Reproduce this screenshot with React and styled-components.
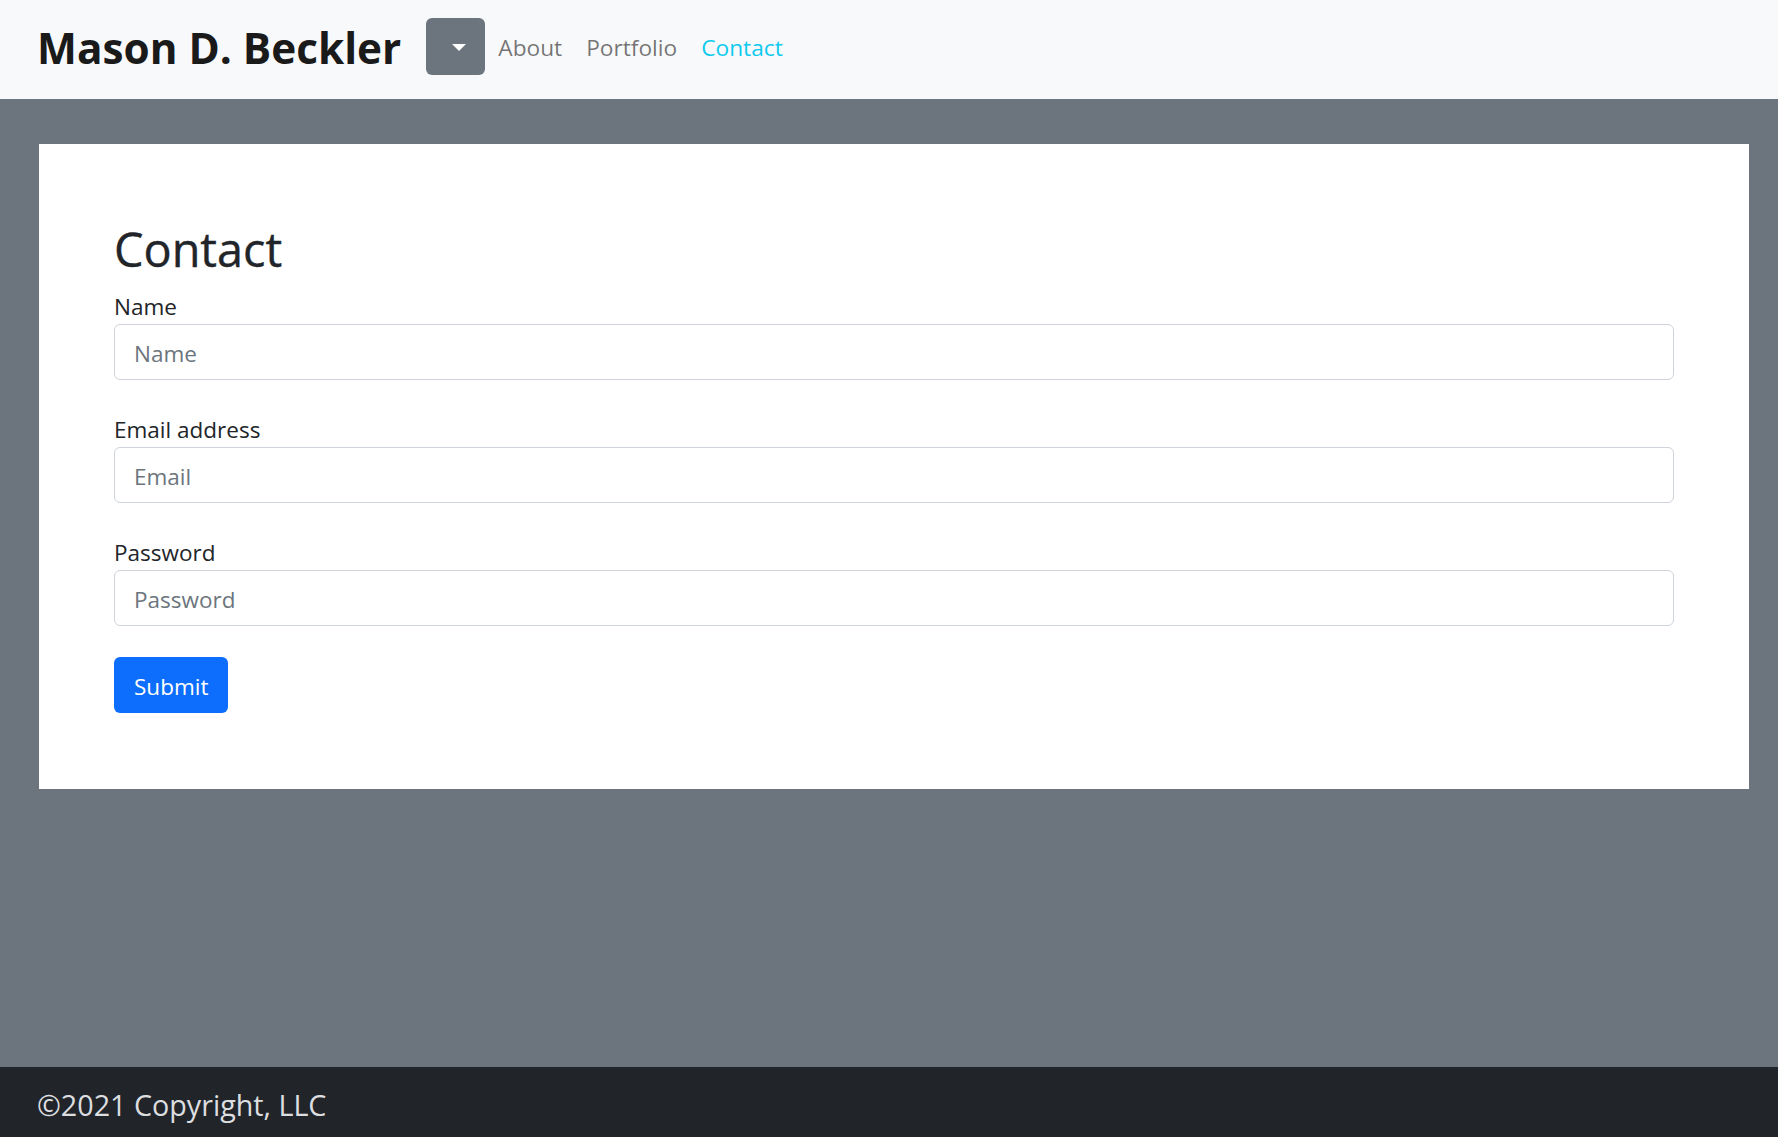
import React from "react";
import styled, { createGlobalStyle } from "styled-components";

const GlobalStyle = createGlobalStyle`
  html, body {
    margin: 0;
    padding: 0;
  }
  body {
    font-family: "Open Sans", "Noto Sans", "DejaVu Sans", sans-serif;
    color: #212529;
    background: #6c757d;
  }
  *, *::before, *::after { box-sizing: border-box; }
  #root {
    min-height: 100vh;
    display: flex;
    flex-direction: column;
  }
`;

const Navbar = styled.header`
  height: 99px;
  background: #f8f9fa;
  display: flex;
  align-items: center;
  padding: 12px 0 19px 37px;
`;

const Brand = styled.a`
  font-size: 42.3px;
  font-weight: 700;
  line-height: 1;
  padding-top: 5px;
  color: #1a1a1a;
  text-decoration: none;
  margin-right: 25px;
  white-space: nowrap;
`;

const ToggleButton = styled.button`
  width: 59px;
  height: 57px;
  border: none;
  border-radius: 6px;
  background: #6c757d;
  display: flex;
  align-items: center;
  justify-content: center;
  padding: 0;
  cursor: pointer;

  &::after {
    content: "";
    display: block;
    margin-left: 6px;
    margin-top: 2px;
    border-top: 7px solid #fff;
    border-left: 7px solid transparent;
    border-right: 7px solid transparent;
  }
`;

const NavList = styled.nav`
  display: flex;
  align-items: center;
  padding-top: 4px;
`;

const NavLink = styled.a`
  font-size: 22.7px;
  line-height: 36px;
  padding: 0 12px 0 ${(p) => (p.$first ? "13px" : "12px")};
  color: ${(p) => (p.$active ? "#0dcaf0" : "rgba(0, 0, 0, 0.55)")};
  text-decoration: none;
`;

const Main = styled.main`
  flex: 1;
  padding: 45px 29px 0 39px;
`;

const Card = styled.section`
  background: #fff;
  padding: 76px 75px 76px 75px;
`;

const Heading = styled.h2`
  font-size: 46.8px;
  font-weight: 500;
  line-height: 55px;
  margin: 2px 0 11px;
  color: #212529;
  -webkit-text-stroke: 0.4px #212529;
`;

const Field = styled.div`
  display: flex;
  flex-direction: column;
  margin-bottom: 31px;
`;

const Label = styled.label`
  font-size: 22.5px;
  line-height: 36px;
  padding-top: 1px;
  margin-bottom: -1px;
  color: #212529;
`;

const Input = styled.input`
  height: 56px;
  width: 100%;
  border: 1px solid #ced4da;
  border-radius: 6px;
  padding: 3px 19px 0;
  font-family: inherit;
  font-size: 22.5px;
  color: #212529;
  background: #fff;
  outline: none;

  &::placeholder {
    color: #6c757d;
    opacity: 1;
  }
`;

const SubmitButton = styled.button`
  height: 56px;
  padding: 2px 20px 0;
  border: none;
  border-radius: 6px;
  background: #0d6efd;
  color: #fff;
  font-family: inherit;
  font-size: 22.5px;
  cursor: pointer;
`;

const Footer = styled.footer`
  height: 70px;
  background: #212529;
  padding: 17px 0 0 37px;
  color: #dcdee0;
  font-size: 28.7px;
  line-height: 42px;
`;

const fields = [
  { id: "name", label: "Name", type: "text", placeholder: "Name" },
  { id: "email", label: "Email address", type: "email", placeholder: "Email" },
  { id: "password", label: "Password", type: "password", placeholder: "Password" },
];

export default function App() {
  return (
    <>
      <GlobalStyle />
      <Navbar>
        <Brand href="#">Mason D. Beckler</Brand>
        <ToggleButton aria-label="Toggle navigation" />
        <NavList>
          <NavLink href="#" $first>About</NavLink>
          <NavLink href="#">Portfolio</NavLink>
          <NavLink href="#" $active>Contact</NavLink>
        </NavList>
      </Navbar>
      <Main>
        <Card>
          <Heading>Contact</Heading>
          <form onSubmit={(e) => e.preventDefault()}>
            {fields.map((f) => (
              <Field key={f.id}>
                <Label htmlFor={f.id}>{f.label}</Label>
                <Input id={f.id} type={f.type} placeholder={f.placeholder} />
              </Field>
            ))}
            <SubmitButton type="submit">Submit</SubmitButton>
          </form>
        </Card>
      </Main>
      <Footer>©2021 Copyright, LLC</Footer>
    </>
  );
}
